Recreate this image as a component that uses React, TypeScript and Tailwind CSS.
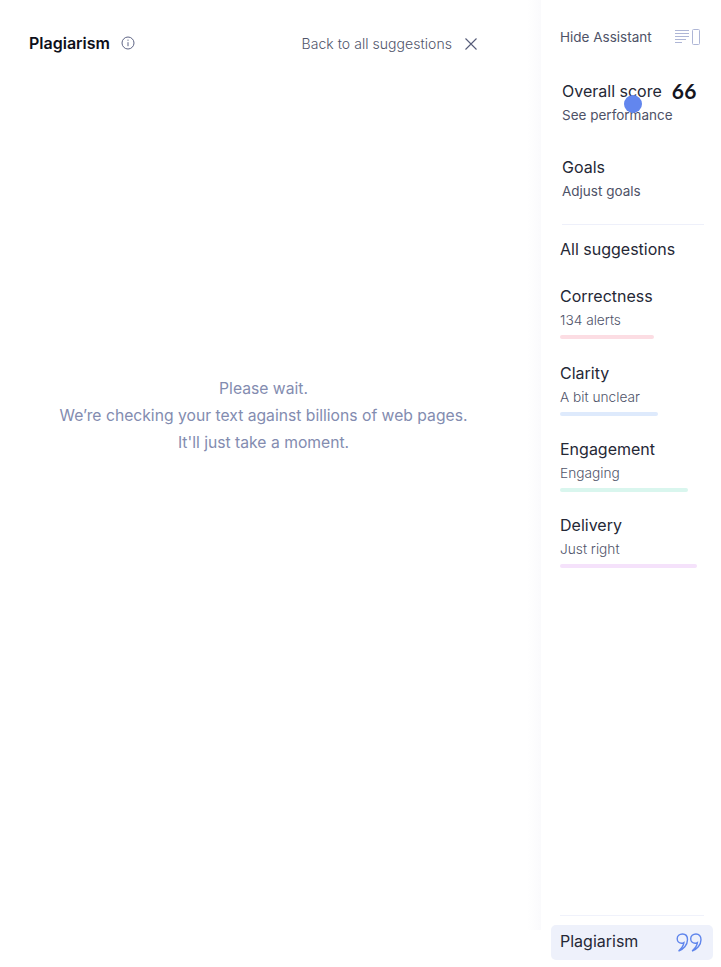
const categories = [
  { name: 'Correctness', note: '134 alerts', bar: 'w-[94px] bg-[#fcdde3]', gap: 'mb-[23px]' },
  { name: 'Clarity', note: 'A bit unclear', bar: 'w-[98px] bg-[#deeafc]', gap: 'mb-[22px]' },
  { name: 'Engagement', note: 'Engaging', bar: 'w-[128px] bg-[#d9f6ee]', gap: 'mb-[22px]' },
  { name: 'Delivery', note: 'Just right', bar: 'w-[137px] bg-[#f5e2fb]', gap: '' }
];

const InfoIcon = () => (
  <svg width="14" height="14" viewBox="0 0 14 14" fill="none" stroke="#5f6585">
    <circle cx="7" cy="7" r="6" />
    <path d="M7 6.200v4M7 3.600v1.200" />
  </svg>
);

const CloseIcon = () => (
  <svg width="12" height="12" viewBox="0 0 12 12" fill="none" stroke="#555b78" strokeWidth="1.1">
    <path d="M.5.5l11 11M11.500.5l-11 11" />
  </svg>
);

const LayoutIcon = () => (
  <svg width="26" height="17" viewBox="0 0 26 17" fill="none" stroke="#aeb6d6">
    <path d="M1 1.500h14M1 4.500h14M1 7.500h14M1 10.500h11M1 13.500h7" />
    <rect x="18.500" y=".5" width="7" height="15" rx="1" />
  </svg>
);

const QuoteIcon = () => (
  <svg width="26" height="20" viewBox="0 0 26 20" fill="none" stroke="#5f85ec" strokeWidth="1.4">
    <path d="M6.500 1C3.500 1 1.200 3 1.200 5.800c0 2.600 2 4.500 4.400 4.500 1 0 1.700-.3 2.300-.7-.4 3.200-2.600 6-5.300 8.400 4.700-1.700 8.900-6 8.900-11.300C11.500 3 9.500 1 6.500 1z" />
    <path d="M20 1c-3 0-5.300 2-5.300 4.800 0 2.600 2 4.500 4.400 4.500 1 0 1.700-.3 2.300-.7-.4 3.200-2.600 6-5.300 8.400 4.700-1.700 8.900-6 8.900-11.300C25 3 23 1 20 1z" />
  </svg>
);

export default function App() {
  return (
    <div className="relative flex h-[967px] w-[721px] overflow-hidden bg-white font-['Inter',sans-serif] text-[#0e101a]">
      <main className="flex w-[527px] flex-col">
        <header className="flex items-center justify-between pt-[32px] pl-[29px] pr-[50px]">
          <div className="flex items-center gap-[11px]">
            <h1 className="text-[16px] leading-[20px] font-semibold">Plagiarism</h1>
            <InfoIcon />
          </div>
          <div className="flex items-center gap-[13px] pt-[2px]">
            <span className="text-[14px] leading-[20px] font-light tracking-[0.05px] text-[#50546a]">Back to all suggestions</span>
            <CloseIcon />
          </div>
        </header>
        <div className="mt-[321px] text-center text-[15.7px] leading-[27px] text-[#838cb0]">
          <p>Please wait.</p>
          <p>We’re checking your text against billions of web pages.</p>
          <p>It'll just take a moment.</p>
        </div>
      </main>

      <div className="h-[930px] w-[14px] bg-gradient-to-r from-white to-[#fafafc]" />

      <aside className="flex w-[180px] flex-col pl-[19px]">
        <div className="flex items-center justify-between pt-[27px] pr-[21px]">
          <span className="text-[13.5px] leading-[20px] text-[#4e5267]">Hide Assistant</span>
          <LayoutIcon />
        </div>

        <div className="mt-[33px] pl-[2px]">
          <div className="flex items-center gap-[10px]">
            <span className="text-[16px] leading-[22px] text-[#252836]">Overall score</span>
            <span className="font-['Lato',sans-serif] text-[21px] leading-[22px] font-bold tracking-[0.3px] text-[#14161f]">66</span>
          </div>
          <div className="mt-[3px] text-[13.5px] leading-[20px] text-[#4e5267]">See performance</div>
        </div>

        <div className="mt-[31px] pl-[2px]">
          <div className="text-[16px] leading-[22px] text-[#252836]">Goals</div>
          <div className="mt-[3px] text-[13.5px] leading-[20px] text-[#4e5267]">Adjust goals</div>
        </div>

        <div className="mt-[23px] ml-[2px] h-px w-[142px] bg-[#eef0fa]" />

        <div className="mt-[13px] text-[16px] leading-[22px] text-[#252836]">All suggestions</div>

        <div className="mt-[25px] flex flex-col">
          {categories.map(item => (
            <div key={item.name} className={item.gap}>
              <div className="text-[16px] leading-[22px] text-[#252836]">{item.name}</div>
              <div className="mt-[3px] text-[13.7px] leading-[20px] font-light text-[#50546a]">{item.note}</div>
              <div className={`mt-[5px] h-[4px] rounded-sm ${item.bar}`} />
            </div>
          ))}
        </div>

        <div className="mt-auto">
          <div className="h-px w-[144px] bg-[#f0f2fb]" />
          <div className="mt-[9px] mb-[7px] -ml-[9px] flex h-[35px] w-[162px] items-center justify-between rounded-[5px] bg-[#eef1fb] pl-[9px] pr-[11px]">
            <span className="pb-[3px] text-[16px] leading-[22px] text-[#252836]">Plagiarism</span>
            <QuoteIcon />
          </div>
        </div>
      </aside>

      <div className="absolute top-[95px] left-[624px] h-[18px] w-[18px] rounded-full bg-[#6286ee]" />
    </div>
  );
}
